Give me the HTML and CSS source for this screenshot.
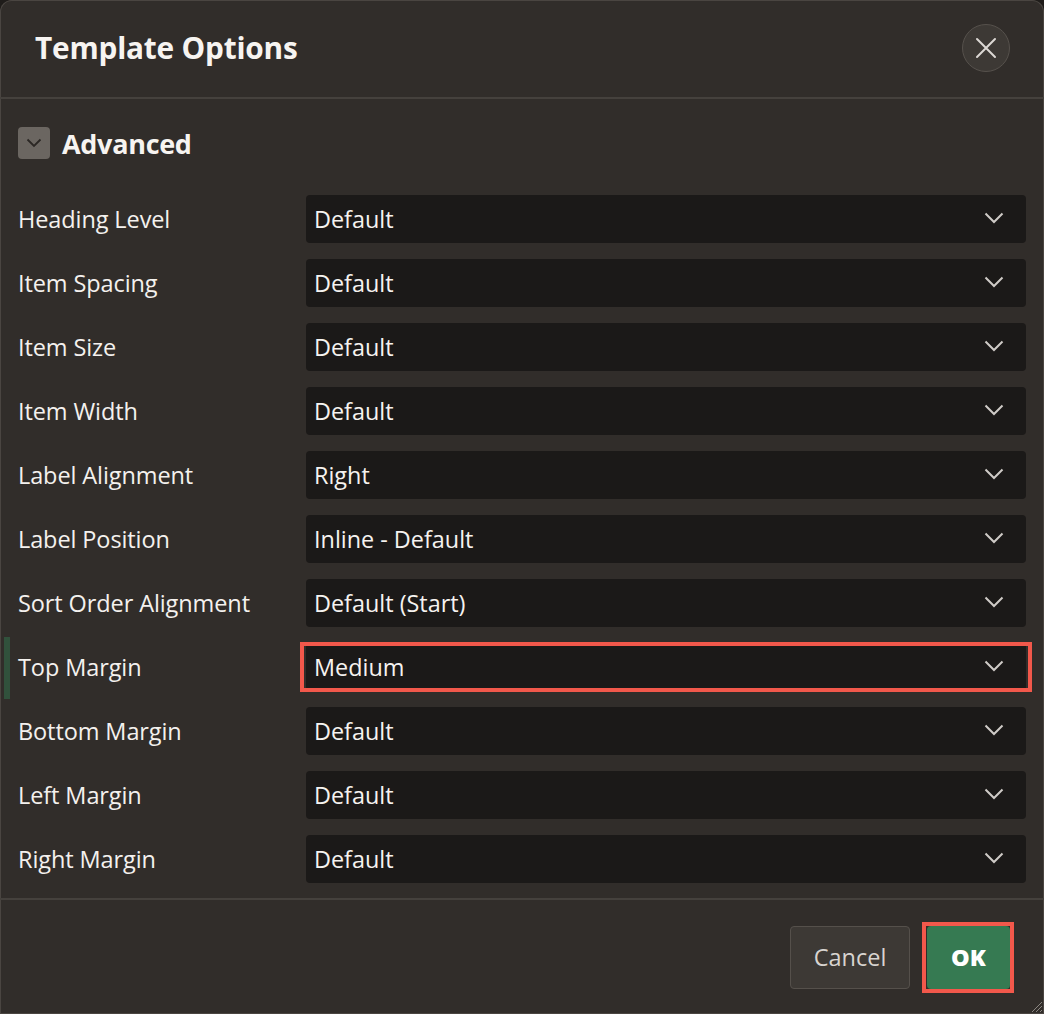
FILE: index.html
```html
<!DOCTYPE html>
<html lang="en">
<head>
<meta charset="utf-8">
<title>Template Options</title>
<link rel="stylesheet" href="styles.css">
</head>
<body>
<div class="dialog">
  <header class="dlg-header">
    <h1 class="dlg-title">Template Options</h1>
    <button class="close-btn" aria-label="Close">
      <svg width="22" height="22" viewBox="0 0 22 22"><path d="M2 2 L20 20 M20 2 L2 20" stroke="#dcd8d4" stroke-width="2" fill="none" stroke-linecap="round"/></svg>
    </button>
  </header>
  <main class="dlg-body">
    <div class="section-head">
      <span class="toggle">
        <svg width="16" height="10" viewBox="0 0 16 10"><polyline points="1.5,1.5 8,8 14.5,1.5" stroke="#2b2724" stroke-width="1.8" fill="none"/></svg>
      </span>
      <span class="section-title">Advanced</span>
    </div>
    <div class="rows">
      <div class="row"><label class="lbl">Heading Level</label><div class="select"><span>Default</span><svg class="chev" width="20" height="12" viewBox="0 0 20 12"><polyline points="1.5,1.5 10,10 18.5,1.5" stroke="#cfcbc7" stroke-width="2" fill="none"/></svg></div></div>
      <div class="row"><label class="lbl">Item Spacing</label><div class="select"><span>Default</span><svg class="chev" width="20" height="12" viewBox="0 0 20 12"><polyline points="1.5,1.5 10,10 18.5,1.5" stroke="#cfcbc7" stroke-width="2" fill="none"/></svg></div></div>
      <div class="row"><label class="lbl">Item Size</label><div class="select"><span>Default</span><svg class="chev" width="20" height="12" viewBox="0 0 20 12"><polyline points="1.5,1.5 10,10 18.5,1.5" stroke="#cfcbc7" stroke-width="2" fill="none"/></svg></div></div>
      <div class="row"><label class="lbl">Item Width</label><div class="select"><span>Default</span><svg class="chev" width="20" height="12" viewBox="0 0 20 12"><polyline points="1.5,1.5 10,10 18.5,1.5" stroke="#cfcbc7" stroke-width="2" fill="none"/></svg></div></div>
      <div class="row"><label class="lbl">Label Alignment</label><div class="select"><span>Right</span><svg class="chev" width="20" height="12" viewBox="0 0 20 12"><polyline points="1.5,1.5 10,10 18.5,1.5" stroke="#cfcbc7" stroke-width="2" fill="none"/></svg></div></div>
      <div class="row"><label class="lbl">Label Position</label><div class="select"><span>Inline - Default</span><svg class="chev" width="20" height="12" viewBox="0 0 20 12"><polyline points="1.5,1.5 10,10 18.5,1.5" stroke="#cfcbc7" stroke-width="2" fill="none"/></svg></div></div>
      <div class="row"><label class="lbl">Sort Order Alignment</label><div class="select"><span>Default (Start)</span><svg class="chev" width="20" height="12" viewBox="0 0 20 12"><polyline points="1.5,1.5 10,10 18.5,1.5" stroke="#cfcbc7" stroke-width="2" fill="none"/></svg></div></div>
      <div class="row row-changed"><label class="lbl">Top Margin</label><div class="select highlighted"><span>Medium</span><svg class="chev" width="20" height="12" viewBox="0 0 20 12"><polyline points="1.5,1.5 10,10 18.5,1.5" stroke="#cfcbc7" stroke-width="2" fill="none"/></svg></div></div>
      <div class="row"><label class="lbl">Bottom Margin</label><div class="select"><span>Default</span><svg class="chev" width="20" height="12" viewBox="0 0 20 12"><polyline points="1.5,1.5 10,10 18.5,1.5" stroke="#cfcbc7" stroke-width="2" fill="none"/></svg></div></div>
      <div class="row"><label class="lbl">Left Margin</label><div class="select"><span>Default</span><svg class="chev" width="20" height="12" viewBox="0 0 20 12"><polyline points="1.5,1.5 10,10 18.5,1.5" stroke="#cfcbc7" stroke-width="2" fill="none"/></svg></div></div>
      <div class="row"><label class="lbl">Right Margin</label><div class="select"><span>Default</span><svg class="chev" width="20" height="12" viewBox="0 0 20 12"><polyline points="1.5,1.5 10,10 18.5,1.5" stroke="#cfcbc7" stroke-width="2" fill="none"/></svg></div></div>
    </div>
  </main>
  <footer class="dlg-footer">
    <button class="btn btn-cancel">Cancel</button>
    <button class="btn btn-ok highlighted">OK</button>
    <svg class="grip" width="14" height="14" viewBox="0 0 14 14"><path d="M13 3 L3 13 M13 7 L7 13 M13 11 L11 13" stroke="#8a8580" stroke-width="1" fill="none"/></svg>
  </footer>
</div>
</body>
</html>
```

FILE: styles.css
```css
* { box-sizing: border-box; }

html, body {
  margin: 0;
  padding: 0;
  background: #1f1c1a;
}

body {
  font-family: "Open Sans", "Noto Sans", "Liberation Sans", sans-serif;
  color: #f4f1ee;
}

.dialog {
  width: 1044px;
  height: 1014px;
  background: #312d2a;
  border-radius: 12px 12px 0 0;
  box-shadow: inset 0 0 0 1px #4a4541;
  display: flex;
  flex-direction: column;
  position: relative;
  overflow: hidden;
}

.dlg-header {
  height: 99px;
  flex: none;
  display: flex;
  align-items: center;
  justify-content: space-between;
  padding: 0 34px 2px 35px;
  border-bottom: 2px solid #45413d;
}

.dlg-title {
  margin: 0;
  font-size: 29.8px;
  font-weight: 700;
  letter-spacing: -0.2px;
  color: #f7f4f1;
}

.close-btn {
  width: 48px;
  height: 48px;
  border-radius: 50%;
  background: #3d3935;
  border: 1.5px solid #56514c;
  display: flex;
  align-items: center;
  justify-content: center;
  padding: 0;
  margin-top: 1px;
}

.dlg-body {
  flex: none;
  padding: 28px 18px 15px 18px;
  border-bottom: 2px solid #45413d;
}

.section-head {
  display: flex;
  align-items: center;
  gap: 12px;
  height: 32px;
  margin-bottom: 36px;
}

.toggle {
  width: 32px;
  height: 32px;
  border-radius: 4px;
  background: #6b6661;
  display: flex;
  align-items: center;
  justify-content: center;
}

.section-title {
  font-size: 27px;
  font-weight: 700;
  letter-spacing: -0.3px;
  color: #f7f4f1;
}

.rows {
  display: flex;
  flex-direction: column;
  gap: 16px;
}

.row {
  display: grid;
  grid-template-columns: 288px 720px;
  align-items: center;
  height: 48px;
  position: relative;
}

.lbl {
  font-size: 23.5px;
  font-weight: 500;
  color: #f4f1ee;
  letter-spacing: -0.1px;
  white-space: nowrap;
}

.row-changed::before {
  content: "";
  position: absolute;
  left: -14px;
  top: -6px;
  width: 6px;
  height: 62px;
  background: #31513c;
}

.select {
  height: 48px;
  background: #1b1918;
  border-radius: 4px;
  display: flex;
  align-items: center;
  justify-content: space-between;
  padding: 0 22px 0 8px;
  font-size: 23.4px;
  font-weight: 500;
  color: #f6f3f0;
  position: relative;
}

.chev { margin-top: -2px; }

.highlighted { position: relative; }

.select.highlighted::after {
  content: "";
  position: absolute;
  left: -6px;
  right: -6px;
  top: -1px;
  bottom: -1px;
  border: 4px solid #f2584b;
}

.dlg-footer {
  flex: 1;
  display: flex;
  justify-content: flex-end;
  align-items: center;
  gap: 17px;
  padding: 0 34px 0 0;
  position: relative;
}

.btn {
  height: 63px;
  border-radius: 4px;
  font-family: inherit;
  font-size: 23.5px;
  padding: 0;
  margin-top: 0;
}

.btn-cancel {
  width: 120px;
  background: #3d3935;
  border: 1px solid #55504b;
  color: #d8d4d0;
  font-weight: 500;
}

.btn-ok {
  width: 83px;
  background: #367a52;
  border: none;
  color: #ffffff;
  font-weight: 800;
}

.btn-ok.highlighted::after {
  content: "";
  position: absolute;
  left: -5px;
  right: -4px;
  top: -4px;
  bottom: -4px;
  border: 4px solid #f2584b;
}

.grip {
  position: absolute;
  right: 1px;
  bottom: 1px;
}
```
